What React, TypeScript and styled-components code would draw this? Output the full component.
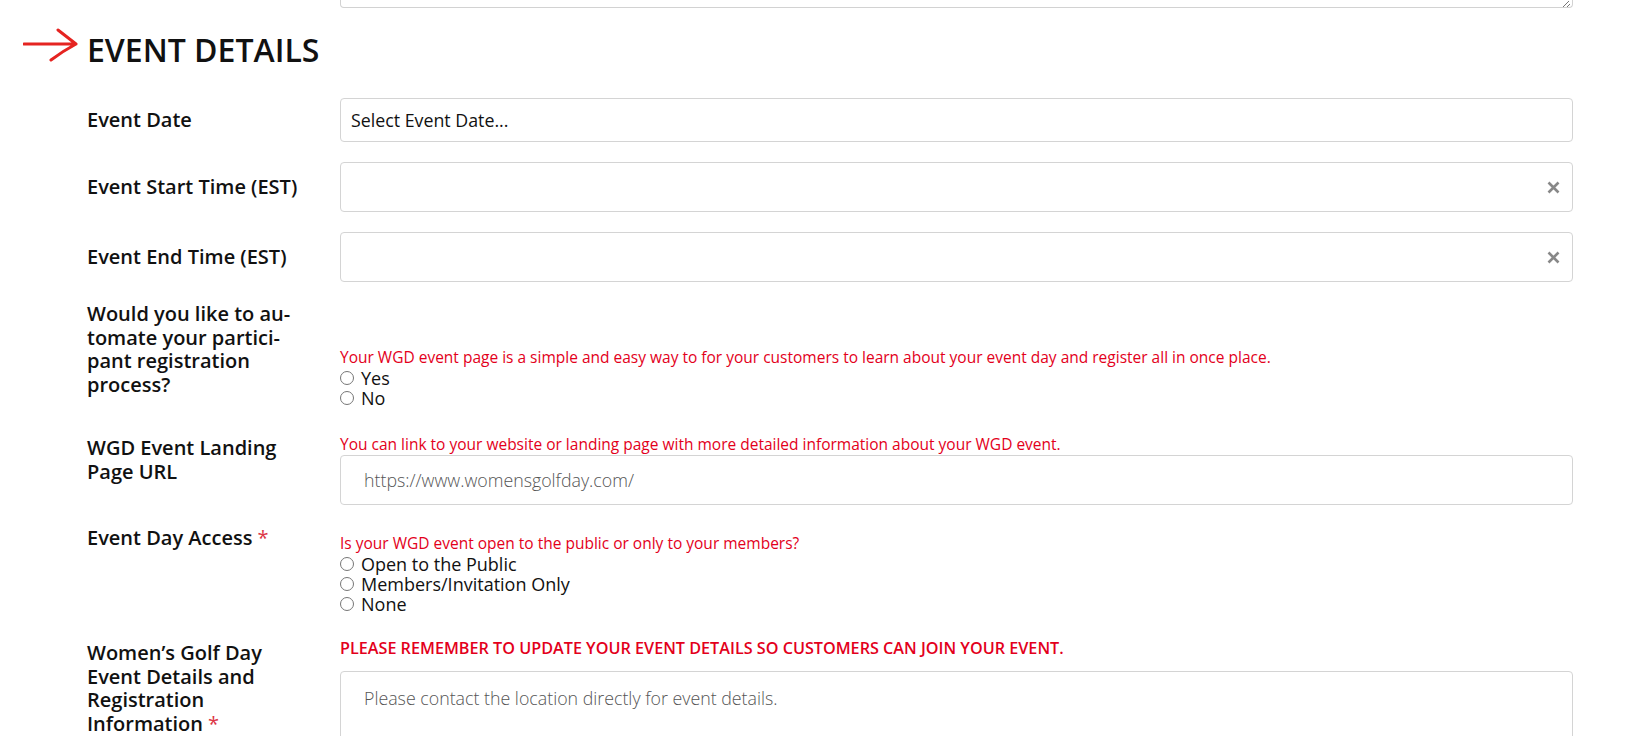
import styled, { createGlobalStyle } from "styled-components";

const GlobalStyle = createGlobalStyle`
  body {
    margin: 0;
    background: #fff;
    color: #111;
    font-family: "Open Sans", "Liberation Sans", sans-serif;
  }
`;

const Page = styled.div`
  width: 1627px;
  height: 736px;
  overflow: hidden;
  box-sizing: border-box;
  padding: 0 54px 0 23px;
`;

const Form = styled.div`
  margin-left: 64px;
  display: flex;
  flex-direction: column;
`;

const Row = styled.div<{ $top?: number; $align?: string }>`
  display: grid;
  grid-template-columns: 225px 1fr;
  column-gap: 28px;
  margin-top: ${(p) => p.$top ?? 0}px;
  align-items: ${(p) => p.$align ?? "start"};
`;

const TextareaStub = styled.div`
  height: 7px;
  border: 1px solid #d2d2d2;
  border-top: none;
  border-radius: 0 0 4px 4px;
  display: flex;
  justify-content: flex-end;
  align-items: flex-end;
  padding-right: 2px;
`;

const HeadingRow = styled.div`
  display: flex;
  align-items: flex-start;
  gap: 8px;
  margin-top: 20px;
`;

const Heading = styled.h1`
  margin: 0;
  font-size: 32px;
  line-height: 44px;
  font-weight: 600;
  color: #111;
`;

const Label = styled.label<{ $pad?: number }>`
  font-size: 20px;
  font-weight: 600;
  line-height: 23.5px;
  padding-top: ${(p) => p.$pad ?? 0}px;
  color: #111;
`;

const Required = styled.span`
  color: #dc3545;
  font-weight: 400;
  margin-left: 5px;
`;

const Control = styled.div<{ $pad?: number }>`
  display: flex;
  flex-direction: column;
  min-width: 0;
  padding-top: ${(p) => p.$pad ?? 0}px;
`;

const Hint = styled.div<{ $strong?: boolean; $gap?: number }>`
  color: #e3001b;
  font-size: ${(p) => (p.$strong ? 16.2 : 15.5)}px;
  line-height: 22px;
  font-weight: ${(p) => (p.$strong ? 600 : 400)};
  text-transform: ${(p) => (p.$strong ? "uppercase" : "none")};
  margin-bottom: ${(p) => p.$gap ?? 0}px;
  white-space: nowrap;
`;

const TextInput = styled.input<{ $height: number; $indent: number; $muted?: boolean }>`
  box-sizing: border-box;
  width: 100%;
  height: ${(p) => p.$height}px;
  padding: 0 12px 0 ${(p) => p.$indent}px;
  border: 1px solid #d4d4d4;
  border-radius: 4px;
  font-family: inherit;
  font-size: 17.8px;
  font-weight: ${(p) => (p.$muted ? 300 : 400)};
  color: #111;
  outline: none;
  background: #fff;

  &::placeholder {
    color: ${(p) => (p.$muted ? "#555" : "#111")};
    opacity: 1;
  }
`;

const TimeBox = styled.div`
  box-sizing: border-box;
  height: 50px;
  border: 1px solid #d4d4d4;
  border-radius: 4px;
  display: flex;
  align-items: center;
  justify-content: flex-end;
  padding-right: 12px;
`;

const ClearButton = styled.button`
  border: none;
  background: none;
  padding: 0;
  width: 13px;
  height: 13px;
  display: flex;
  cursor: pointer;
`;

const Options = styled.div`
  display: flex;
  flex-direction: column;
`;

const Option = styled.label`
  display: flex;
  align-items: center;
  height: 20px;
  line-height: 20px;
  font-size: 18px;
  color: #111;
`;

const Radio = styled.input.attrs({ type: "radio" })`
  width: 14px;
  height: 14px;
  margin: 0 7px 0 0;
`;

const TextArea = styled.textarea`
  box-sizing: border-box;
  width: 100%;
  height: 130px;
  padding: 14px 23px;
  border: 1px solid #d4d4d4;
  border-radius: 4px;
  font-family: inherit;
  font-size: 17.8px;
  font-weight: 300;
  resize: vertical;
  outline: none;

  &::placeholder {
    color: #555;
    opacity: 1;
  }
`;

function Arrow() {
  return (
    <svg width="56" height="34" viewBox="0 0 56 34" fill="none">
      <path
        d="M1 16 H53 M35 2 Q44 9 53 16 Q40 23 28 32"
        stroke="#e52421"
        strokeWidth="3"
        strokeLinecap="round"
        strokeLinejoin="round"
      />
    </svg>
  );
}

function ClearIcon() {
  return (
    <svg width="13" height="13" viewBox="0 0 13 13">
      <path d="M1.5 1.5 L11.5 11.5 M11.5 1.5 L1.5 11.5" stroke="#888" strokeWidth="2.6" />
    </svg>
  );
}

function ResizeGrip() {
  return (
    <svg width="10" height="7" viewBox="0 0 10 7">
      <path d="M3 7 L9 1 M7 7 L10 4" stroke="#777" strokeWidth="1" />
    </svg>
  );
}

function TimeField() {
  return (
    <TimeBox>
      <ClearButton aria-label="Clear">
        <ClearIcon />
      </ClearButton>
    </TimeBox>
  );
}

export default function App() {
  return (
    <Page>
      <GlobalStyle />
      <Form>
        <Row>
          <div />
          <TextareaStub>
            <ResizeGrip />
          </TextareaStub>
        </Row>
      </Form>

      <HeadingRow>
        <Arrow />
        <Heading>EVENT DETAILS</Heading>
      </HeadingRow>

      <Form>
        <Row $top={26} $align="center">
          <Label>Event Date</Label>
          <TextInput $height={44} $indent={10} placeholder="Select Event Date..." readOnly />
        </Row>

        <Row $top={20} $align="center">
          <Label>Event Start Time (EST)</Label>
          <TimeField />
        </Row>

        <Row $top={20} $align="center">
          <Label>Event End Time (EST)</Label>
          <TimeField />
        </Row>

        <Row $top={20}>
          <Label>Would you like to au&shy;tomate your partici&shy;pant registration process?</Label>
          <Control $pad={44}>
            <Hint>
              Your WGD event page is a simple and easy way to for your customers to learn about your event day and register all in once place.
            </Hint>
            <Options>
              <Option>
                <Radio name="automate" />
                Yes
              </Option>
              <Option>
                <Radio name="automate" />
                No
              </Option>
            </Options>
          </Control>
        </Row>

        <Row $top={25}>
          <Label $pad={3}>WGD Event Landing Page URL</Label>
          <Control>
            <Hint>You can link to your website or landing page with more detailed information about your WGD event.</Hint>
            <TextInput $height={50} $indent={23} $muted placeholder="https://www.womensgolfday.com/" />
          </Control>
        </Row>

        <Row $top={21}>
          <Label>
            Event Day Access<Required>*</Required>
          </Label>
          <Control $pad={6}>
            <Hint>Is your WGD event open to the public or only to your members?</Hint>
            <Options>
              <Option>
                <Radio name="access" />
                Open to the Public
              </Option>
              <Option>
                <Radio name="access" />
                Members/Invitation Only
              </Option>
              <Option>
                <Radio name="access" />
                None
              </Option>
            </Options>
          </Control>
        </Row>

        <Row $top={23}>
          <Label $pad={4}>
            Women’s Golf Day Event Details and Registration Information<Required>*</Required>
          </Label>
          <Control>
            <Hint $strong $gap={12}>
              Please remember to update your event details so customers can join your event.
            </Hint>
            <TextArea placeholder="Please contact the location directly for event details." />
          </Control>
        </Row>
      </Form>
    </Page>
  );
}
